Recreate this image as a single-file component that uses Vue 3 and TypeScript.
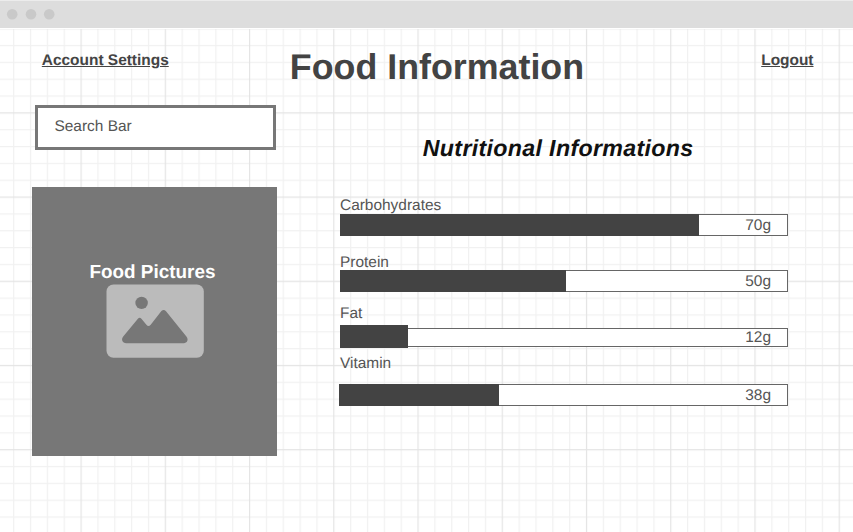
<script setup lang="ts">
interface Nutrient {
  key: string
  label: string
  amount: string
  fill: number
}

const nutrients: Nutrient[] = [
  { key: 'carbs', label: 'Carbohydrates', amount: '70g', fill: 80.13 },
  { key: 'protein', label: 'Protein', amount: '50g', fill: 50.35 },
  { key: 'fat', label: 'Fat', amount: '12g', fill: 15.1 },
  { key: 'vitamin', label: 'Vitamin', amount: '38g', fill: 35.6 },
]
</script>

<template>
  <div class="window">
    <div class="titlebar">
      <svg class="dots" width="60" height="12" viewBox="0 0 60 12">
        <circle cx="6.2" cy="6.2" r="5.3" />
        <circle cx="25" cy="6.2" r="5.3" />
        <circle cx="43.2" cy="6.2" r="5.3" />
      </svg>
    </div>
    <div class="canvas">
      <svg class="sheet" width="853" height="504" viewBox="0 28 853 504">
        <defs>
          <pattern id="cells" x="80.5" y="112.3" width="84.24" height="84.2" patternUnits="userSpaceOnUse">
            <path
              class="minor"
              d="M17.45 0V84.2M34.3 0V84.2M51.14 0V84.2M67.99 0V84.2M0 17.44H84.24M0 34.28H84.24M0 51.12H84.24M0 67.96H84.24"
            />
            <path class="major" d="M0.6 0V84.2M0 0.6H84.24" />
          </pattern>
        </defs>
        <rect x="0" y="29" width="853" height="503" fill="url(#cells)" />
      </svg>
      <div class="page">
        <header class="header">
          <a class="link">Account Settings</a>
          <h1 class="title">Food Information</h1>
          <a class="link">Logout</a>
        </header>
        <main class="content">
          <section class="left">
            <div class="search">Search Bar</div>
            <div class="picture">
              <span class="caption">Food Pictures</span>
              <svg class="image-icon" width="98" height="74" viewBox="0 0 98 74">
                <rect x="0.5" y="0.5" width="97.3" height="73.3" rx="7" fill="#bbb" />
                <circle cx="35.6" cy="18.9" r="6.2" fill="#777" />
                <path
                  d="M17.2 52.6L31.9 34.7Q33.6 32.8 35.4 34.7L40.4 40.8Q42.5 43.2 44.7 40.7L55.4 27.1Q57.7 24.8 60 27.2L80.4 52.6C83 55.8 81 59.3 77.7 59.3H20.2C16.7 59.3 14.7 55.7 17.2 52.6Z"
                  fill="#777"
                />
              </svg>
            </div>
          </section>
          <section class="right">
            <h2 class="subtitle">Nutritional Informations</h2>
            <div class="nutrients">
              <div v-for="n in nutrients" :key="n.key" class="nutrient" :class="n.key">
                <span class="label">{{ n.label }}</span>
                <div class="bar">
                  <div class="fill" :style="{ width: n.fill + '%' }"></div>
                  <span class="amount">{{ n.amount }}</span>
                </div>
              </div>
            </div>
          </section>
        </main>
      </div>
    </div>
  </div>
</template>

<style>
body {
  overflow: hidden;
  background: #fff;
}
</style>

<style scoped>
.window {
  width: 853px;
  height: 532px;
  display: flex;
  flex-direction: column;
  overflow: hidden;
  background: #fff;
  color: #555;
  font-family: 'Liberation Sans', Arial, sans-serif;
  font-size: 15.44px;
  text-rendering: geometricPrecision;
}
.titlebar {
  box-sizing: border-box;
  height: 28px;
  flex: none;
  padding: 7px 6px 0;
  border-top: 1px solid #ececec;
  background: #ddd;
}
.dots {
  display: block;
  fill: #c9c9c9;
}
.canvas {
  display: grid;
  height: 504px;
}
.sheet,
.page {
  grid-area: 1 / 1;
}
.sheet {
  display: block;
}
.minor,
.major {
  fill: none;
  stroke-width: 1.2;
}
.minor {
  stroke: #f1f1f1;
}
.major {
  stroke: #e4e4e4;
}
.page {
  z-index: 1;
  display: flex;
  flex-direction: column;
}
.header {
  display: grid;
  grid-template-columns: 248px 1fr auto;
  align-items: start;
  padding: 19px 39.5px 0 41.8px;
  height: 57.7px;
}
.link {
  margin-top: 5px;
  line-height: 18px;
  font-weight: 700;
  color: #444;
  text-decoration: underline;
}
.title {
  margin: 0;
  font-size: 35.8px;
  line-height: 40px;
  color: #434343;
}
.content {
  display: flex;
}
.left {
  width: 245.5px;
  margin-left: 31.7px;
}
.search {
  box-sizing: border-box;
  width: 241px;
  height: 45px;
  margin-left: 3.3px;
  padding: 10px 16.5px;
  border: 3px solid #777;
  background: #fff;
  line-height: 18px;
}
.picture {
  box-sizing: border-box;
  height: 268.6px;
  margin-top: 37.4px;
  padding-top: 74px;
  display: flex;
  flex-direction: column;
  align-items: center;
  background: #777;
}
.caption {
  height: 23px;
  margin-right: 4px;
  line-height: 24px;
  font-size: 18.9px;
  font-weight: 700;
  color: #fff;
}
.image-icon {
  flex: none;
  display: block;
  margin-left: 1px;
}
.right {
  width: 448px;
  margin-left: 62.8px;
  padding-top: 29.3px;
}
.subtitle {
  margin: 0 0 0 82.8px;
  font-size: 23.2px;
  font-style: italic;
  line-height: 28px;
  letter-spacing: 0.33px;
  white-space: nowrap;
  color: #111;
}
.nutrients {
  padding-top: 35px;
}
.nutrient {
  display: flex;
  flex-direction: column;
  margin-bottom: 17px;
}
.label {
  height: 17px;
  line-height: 19px;
}
.carbs .label {
  line-height: 17px;
}
.bar {
  display: flex;
  align-items: center;
  height: 22px;
  background: #fff;
  box-shadow: inset 0 0 0 1px #666;
}
.fill {
  height: 100%;
  flex: none;
  background: #434343;
}
.amount {
  margin-left: auto;
  padding: 2px 17px 0 0;
  line-height: 18px;
}
.protein {
  margin-bottom: 12px;
}
.fat {
  margin-bottom: 7px;
}
.fat .label {
  margin-bottom: 7px;
}
.fat .bar {
  height: 19px;
}
.fat .fill {
  height: 23px;
  margin-top: -1px;
}
.vitamin .label {
  margin-bottom: 13px;
}
.vitamin .fill {
  margin-left: -0.7px;
}
</style>
